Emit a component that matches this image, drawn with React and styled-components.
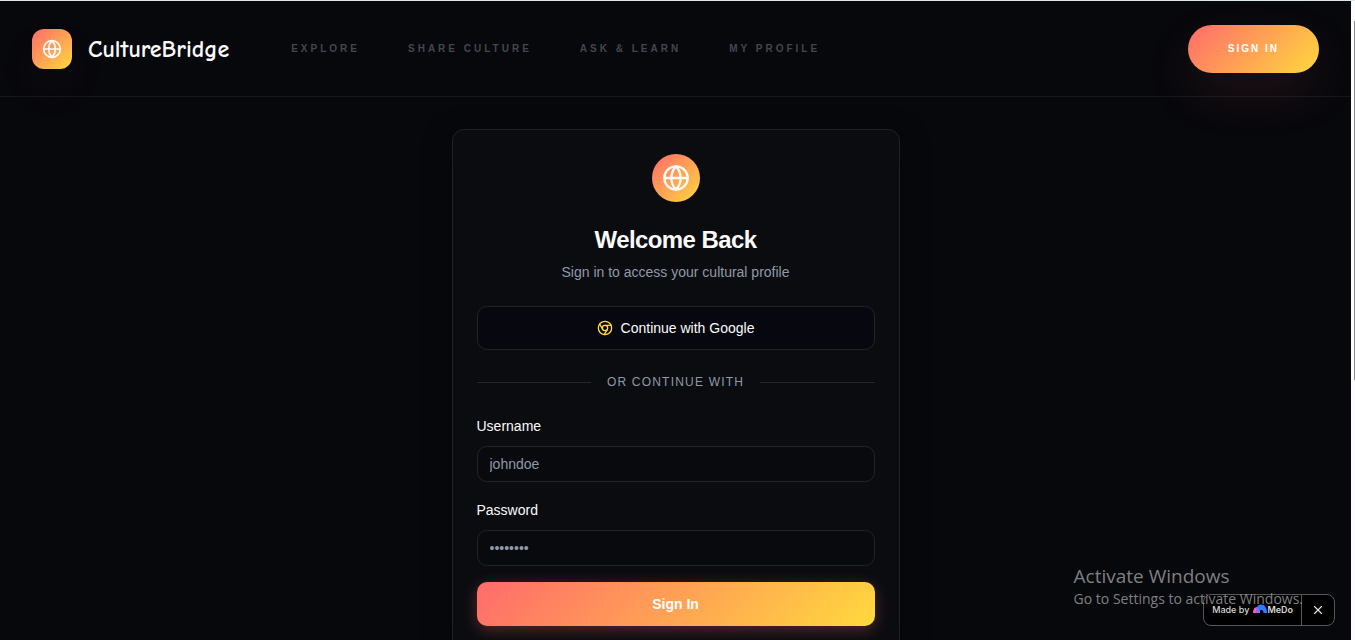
import styled, { createGlobalStyle, css } from 'styled-components';
import { Chromium, Globe, X } from 'lucide-react';

const navLinks = ['Explore', 'Share Culture', 'Ask & Learn', 'My Profile'];

export default function App() {
  return (
    <Window>
      <GlobalStyle />
      <Page>
        <Header>
          <Brand href='#'>
            <BrandIcon>
              <Globe size={20} />
            </BrandIcon>
            <BrandName>CultureBridge</BrandName>
          </Brand>
          <Nav>
            {navLinks.map(link => (
              <NavLink key={link} href='#'>
                {link}
              </NavLink>
            ))}
          </Nav>
          <HeaderButton type='button'>Sign In</HeaderButton>
        </Header>
        <Main>
          <Card>
            <CardIcon>
              <Globe size={28} />
            </CardIcon>
            <Title>Welcome Back</Title>
            <Subtitle>Sign in to access your cultural profile</Subtitle>
            <GoogleButton type='button'>
              <Chromium size={16} />
              Continue with Google
            </GoogleButton>
            <Divider>Or continue with</Divider>
            <Form onSubmit={e => e.preventDefault()}>
              <Field>
                <Label htmlFor='username'>Username</Label>
                <Input id='username' placeholder='johndoe' />
              </Field>
              <Field>
                <Label htmlFor='password'>Password</Label>
                <Input id='password' type='password' placeholder='••••••••' />
              </Field>
              <SubmitButton type='submit'>Sign In</SubmitButton>
            </Form>
          </Card>
        </Main>
        <Badge>
          <BadgeLink href='#'>
            Made by
            <Medo>
              <MedoMark />
              MeDo
            </Medo>
          </BadgeLink>
          <BadgeClose type='button' aria-label='Close'>
            <X size={14} />
          </BadgeClose>
        </Badge>
        <Activation>
          <h2>Activate Windows</h2>
          <p>Go to Settings to activate Windows.</p>
        </Activation>
      </Page>
      <Scrollbar>
        <Thumb />
      </Scrollbar>
    </Window>
  );
}

function MedoMark() {
  return (
    <svg width='14' height='10' viewBox='0 0 14 10' aria-hidden='true'>
      <path d='M0 9C0 5 1.500 3 4 3c2 0 3 1.500 3 3.500V9z' fill='#f45fc0' />
      <path
        d='M3 9C3 3.500 4.700 0.500 8 0.500c3.600 0 6 3 6 8.500h-3.500c0-2-.8-3-2.200-3S6 7 6 9z'
        fill='#2f7bff'
      />
      <path
        d='M3 9c0-2.500.3-4.200 1-5.600C5.500 3.800 6.500 5 6.500 6.800 6.100 7.400 6 8.200 6 9z'
        fill='#8a6bff'
      />
    </svg>
  );
}

const GlobalStyle = createGlobalStyle`
  * {
    box-sizing: border-box;
  }
  body {
    margin: 0;
    background: #fff;
    color: #fafafa;
    font-family: 'Liberation Sans', Arial, sans-serif;
  }
  button,
  input {
    font-family: inherit;
  }
  a {
    color: inherit;
    text-decoration: none;
  }
`;

const gradient = css`
  background: linear-gradient(135deg, #ff6b6b 0%, #ffd93d 100%);
`;

const center = css`
  display: flex;
  align-items: center;
  justify-content: center;
`;

const Window = styled.div`
  display: flex;
  height: 100vh;
  border-top: 1px solid #dfe8e6;
  overflow: hidden;
`;

const Page = styled.div`
  position: relative;
  flex: 1;
  background-color: #07080c;
  overflow: hidden;
`;

const Header = styled.header`
  display: flex;
  align-items: center;
  height: 96px;
  padding: 0 32px;
  border-bottom: 1px solid #15161a;
`;

const Brand = styled.a`
  display: flex;
  align-items: center;
  gap: 16px;
`;

const BrandIcon = styled.span`
  ${center}
  ${gradient}
  width: 40px;
  height: 40px;
  border-radius: 12px;
  box-shadow: 0 20px 50px rgba(255, 107, 107, 0.05);
`;

const BrandName = styled.span`
  font-family: 'Comic Sans MS', 'Comic Neue', Lato, sans-serif;
  font-size: 24px;
  font-weight: 700;
`;

const Nav = styled.nav`
  display: flex;
  flex: 1;
  gap: 48px;
  margin-left: 62px;
`;

const NavLink = styled.a`
  color: #44464c;
  font-size: 10px;
  font-weight: 700;
  letter-spacing: 3px;
  text-transform: uppercase;
`;

const HeaderButton = styled.button`
  ${gradient}
  height: 48px;
  padding: 0 40px;
  border: none;
  border-radius: 24px;
  color: white;
  font-size: 10px;
  font-weight: 700;
  letter-spacing: 2px;
  text-transform: uppercase;
  box-shadow: 0 20px 50px rgba(255, 107, 107, 0.1);
`;

const Main = styled.main`
  display: flex;
  justify-content: center;
  padding: 32px 16px;
`;

const Card = styled.section`
  display: flex;
  flex-direction: column;
  width: 100%;
  max-width: 448px;
  padding: 24px;
  border: 1px solid #202226;
  border-radius: 12px;
  background-color: #0b0c10;
  box-shadow: 0 8px 32px rgba(0, 0, 0, 0.3);
`;

const CardIcon = styled.div`
  ${center}
  ${gradient}
  align-self: center;
  width: 48px;
  height: 48px;
  border-radius: 50%;
`;

const Title = styled.h1`
  margin: 22px 0 6px;
  font-size: 24px;
  line-height: 32px;
  letter-spacing: -0.025em;
  text-align: center;
`;

const Subtitle = styled.p`
  margin: 0 0 24px;
  color: #8f99a8;
  font-size: 14px;
  line-height: 20px;
  text-align: center;
`;

const GoogleButton = styled.button`
  ${center}
  gap: 8px;
  height: 44px;
  border: 1px solid #222428;
  border-radius: 10px;
  background-color: #07080f;
  color: #fafafa;
  font-size: 14px;
  > svg {
    color: #ffd93d;
  }
`;

const Divider = styled.div`
  display: flex;
  align-items: center;
  gap: 16px;
  margin: 24px 0;
  color: #8f99a8;
  font-size: 12px;
  line-height: 16px;
  letter-spacing: 0.1em;
  text-transform: uppercase;
  &::before,
  &::after {
    content: '';
    flex: 1;
    height: 1px;
    background-color: #25272b;
  }
`;

const Form = styled.form`
  display: flex;
  flex-direction: column;
  gap: 16px;
`;

const Field = styled.div`
  display: flex;
  flex-direction: column;
  gap: 8px;
`;

const Label = styled.label`
  font-size: 14px;
  line-height: 24px;
`;

const Input = styled.input`
  width: 100%;
  height: 36px;
  padding: 0 12px;
  border: 1px solid #222428;
  border-radius: 10px;
  outline: none;
  background-color: #090a0e;
  color: #fafafa;
  font-size: 14px;
  &::placeholder {
    color: #8f99a8;
  }
`;

const SubmitButton = styled.button`
  ${gradient}
  height: 44px;
  border: none;
  border-radius: 10px;
  color: white;
  font-size: 14px;
  font-weight: 700;
  box-shadow: 0 4px 15px rgba(255, 107, 107, 0.3);
`;

const Badge = styled.div`
  position: absolute;
  right: 16px;
  bottom: 14px;
  display: flex;
  height: 32px;
  border: 1px solid #55565a;
  border-radius: 8px;
  background-color: #000;
`;

const BadgeLink = styled.a`
  display: flex;
  align-items: center;
  gap: 4px;
  padding: 0 8px 2px;
  color: #d8d8d8;
  font-family: Inter, sans-serif;
  font-size: 9px;
  font-weight: 500;
`;

const Medo = styled.span`
  display: flex;
  align-items: center;
  font-weight: 600;
`;

const BadgeClose = styled.button`
  ${center}
  width: 33px;
  padding: 0;
  border: none;
  border-left: 1px solid #55565a;
  background: none;
  color: #e4e4e4;
`;

const Activation = styled.div`
  position: absolute;
  right: 48px;
  bottom: 31px;
  color: rgba(160, 160, 160, 0.8);
  font-family: 'Segoe UI', 'Open Sans', sans-serif;
  pointer-events: none;
  > h2 {
    margin: 0;
    font-size: 19px;
    font-weight: 400;
    line-height: 26px;
  }
  > p {
    margin: 0;
    font-size: 14px;
    line-height: 20px;
  }
`;

const Scrollbar = styled.div`
  display: flex;
  justify-content: flex-end;
  width: 4px;
  padding: 20px 0;
  background-color: #fcfcfc;
`;

const Thumb = styled.div`
  width: 1px;
  height: 60%;
  background-color: #8b8b8b;
`;
